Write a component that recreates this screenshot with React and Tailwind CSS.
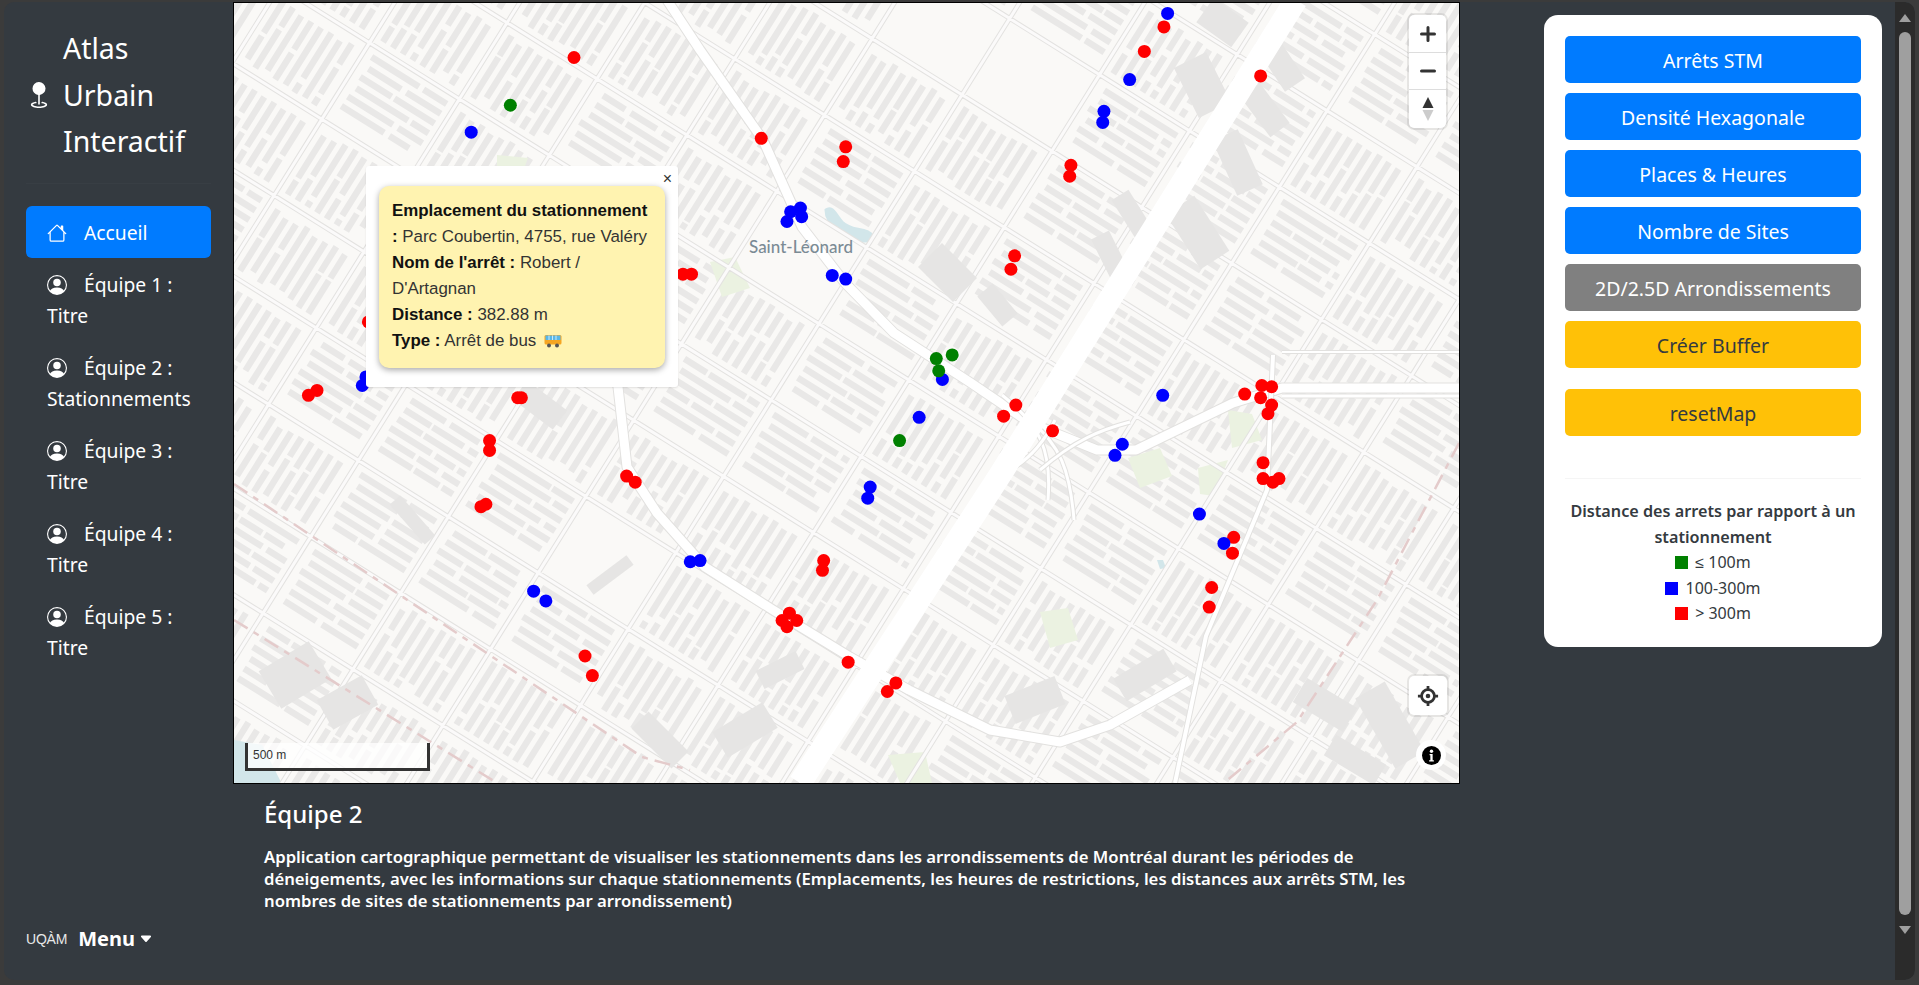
import React from "react";
import { BsGeoFill, BsHouse, BsPersonCircle, BsCaretDownFill } from "react-icons/bs";

// marker positions, page pixels
const s = 1.2239;
const RED = [[469,47],[622,113],[691,120],[689,132],[875,135],[874,144],[829,209],[826,220],[935,42],[951,22],[1030,62],[558,224],[565,224],[301,263],[252,323],[259,319],[423,325],[426,325],[400,360],[400,368],[393,414],[397,412],[512,389],[519,394],[673,458],[672,466],[645,501],[639,507],[651,507],[643,512],[478,536],[484,552],[693,541],[732,558],[725,565],[830,331],[820,340],[860,352],[1017,322],[1031,315],[1039,316],[1030,325],[1039,331],[1036,338],[1032,378],[1032,391],[1040,394],[1045,391],[1008,439],[1007,452],[990,480],[988,496]];
const BLUE = [[954,11],[923,65],[902,91],[901,100],[385,108],[646,173],[654,170],[655,177],[643,181],[680,225],[691,228],[770,310],[751,341],[711,398],[709,407],[950,323],[917,363],[911,372],[980,420],[1000,444],[564,459],[572,458],[436,483],[446,491],[296,315],[299,308]];
const GREEN = [[417,86],[765,293],[778,290],[767,303],[735,360]];

const EMPTY = [[985,60,62],[610,600,48],[800,225,40],[1240,450,28],[1190,430,22]];

function buildMap() {
  let seed = 42;
  const rnd = () => {
    seed = (seed * 16807) % 2147483647;
    return seed / 2147483647;
  };
  const ux = -0.53, uy = 0.848, vx = 0.848, vy = 0.53;
  let strips = "";
  let streets = "";
  const A = 106, B = 90;
  for (let i = -11; i < 13; i++) {
    for (let j = -11; j < 13; j++) {
      const cx = 840 + i * A * vx + j * B * ux;
      const cy = 390 + i * A * vy + j * B * uy;
      if (cx < 130 || cx > 1560 || cy < -90 || cy > 880) continue;
      const x0 = cx - (A / 2) * vx - (B / 2) * ux;
      const y0 = cy - (A / 2) * vy - (B / 2) * uy;
      streets += `M${x0} ${y0}l${A * vx} ${A * vy}M${x0} ${y0}l${B * ux} ${B * uy}`;
      if (EMPTY.some(([x, y, r]) => Math.hypot(cx - x, cy - y) < r)) continue;
      const flip = rnd() > 0.55;
      const [ax, ay, al, bx, by, bl] = flip ? [vx, vy, A, ux, uy, B] : [ux, uy, B, vx, vy, A];
      const n = Math.floor((bl - 12) / 11.5);
      for (let k = 0; k < n; k++) {
        const off = -bl / 2 + 11 + k * 11.5;
        const half = al / 2 - 8;
        // every strip is cut in pieces so the rows look like houses
        let t = -half + rnd() * 6;
        while (t < half - 6) {
          const len = Math.min(half - t, 22 + rnd() * 46);
          const px = cx + off * bx + t * ax;
          const py = cy + off * by + t * ay;
          strips += `M${px.toFixed(1)} ${py.toFixed(1)}l${(len * ax).toFixed(1)} ${(len * ay).toFixed(1)}`;
          t += len + 2 + rnd() * 5;
        }
      }
    }
  }
  return { strips, streets };
}

const { strips, streets } = buildMap();

const BIG_ROADS = [
  { d: "M667 0L700 50L763 140L802 227L845 283L894 333L971 383L1030 423L1097 450L1136 450L1233 403L1282 388L1460 388", w: 9 },
  { d: "M612 367L618 387L627 467L657 513L705 567L773 610L850 657L909 690L990 730L1060 742L1110 725L1190 680", w: 9 },
  { d: "M1273 355L1267 490L1206 636L1175 783", w: 4 },
  { d: "M1002 395C1040 425 1052 450 1048 500", w: 3 },
  { d: "M1030 420C1060 445 1070 470 1074 520", w: 3 },
  { d: "M1040 470C1075 440 1100 430 1130 422", w: 3 },
  { d: "M990 478C1020 470 1040 450 1055 420", w: 3 },
  { d: "M1282 396L1460 396", w: 3 },
  { d: "M1282 352L1460 352", w: 2 },
];

const BIG_HOUSES = [
  [1205,10,1240,35,30],[1190,60,1215,110,36],[1265,40,1295,85,24],[1250,90,1280,130,24],[1225,135,1250,190,28],
  [1180,205,1215,260,34],[1120,195,1145,235,20],[1100,235,1125,285,20],[930,255,965,290,34],[985,290,1010,320,20],
  [270,690,320,660,44],[325,715,370,690,34],[720,745,770,715,30],[640,720,680,760,24],[760,680,800,660,20],
  [1010,710,1060,690,30],[1120,690,1170,660,26],[1300,690,1350,720,28],[1370,690,1410,760,34],[1330,745,1380,775,24],
  [520,390,560,420,24],[395,500,430,540,14],[590,590,630,560,12],
];

const PARKS = ["M710 262L735 257L750 288L722 297Z", "M1040 612L1068 608L1078 640L1050 648Z", "M1128 458L1160 448L1172 476L1140 488Z", "M1198 468L1228 460L1214 496L1200 494Z", "M1228 410L1252 414L1262 440L1232 448Z", "M888 755L925 752L932 783L900 783Z", "M497 155L528 158L525 166L497 166Z"];

function MapDrawing() {
  return (
    <svg viewBox="234 3 1225 780" className="block h-full w-full">
      <rect x="234" y="3" width="1225" height="780" fill="#faf9f7" />
      <path d={strips} stroke="#e9e8e7" strokeWidth="6.5" fill="none" />
      {PARKS.map((d) => (
        <path key={d} d={d} fill="#ebf2e1" />
      ))}
      <path d="M826 210C832 205 836 215 842 222C850 230 858 228 868 232C876 236 874 242 862 241C850 240 842 232 835 226C830 222 826 218 826 210Z" fill="#d2e6ea" stroke="#d2e6ea" strokeWidth="3" />
      <path d="M234 740L262 745L282 784L234 784Z" fill="#d2e6ea" />
      <path d="M1157 560l6 0l3 8l-6 1z" fill="#d2e6ea" />
      <path d={streets} stroke="#e3e2e0" strokeWidth="5" fill="none" />
      <path d={streets} stroke="#fbfafa" strokeWidth="3" fill="none" />
      {BIG_HOUSES.map(([x1, y1, x2, y2, w]) => (
        <line key={`${x1}-${y1}`} x1={x1} y1={y1} x2={x2} y2={y2} stroke="#e6e5e4" strokeWidth={w} />
      ))}
      {BIG_ROADS.map((r) => (
        <g key={r.d} fill="none" strokeLinejoin="round">
          <path d={r.d} stroke="#e2e1df" strokeWidth={r.w + 2} />
          <path d={r.d} stroke="#ffffff" strokeWidth={r.w} />
        </g>
      ))}
      <path d="M1296 0L1240 90L1100 315L1000 475L800 783" stroke="#ffffff" strokeWidth="23" fill="none" />
      <g stroke="#e4cbcb" strokeWidth="2.5" fill="none" strokeDasharray="16 7 6 7">
        <path d="M234 484L642 757L690 770" />
        <path d="M234 620L497 783" />
        <path d="M1459 443L1377 600L1297 722L1224 783" />
      </g>
      {RED.map(([x, y]) => <circle key={`r${x}-${y}`} cx={x * s} cy={y * s} r="6.5" fill="#ff0000" />)}
      {BLUE.map(([x, y]) => <circle key={`b${x}-${y}`} cx={x * s} cy={y * s} r="6.5" fill="#0000ff" />)}
      {GREEN.map(([x, y]) => <circle key={`g${x}-${y}`} cx={x * s} cy={y * s} r="6.5" fill="#008000" />)}
      <text x="801" y="253" textAnchor="middle" fontFamily="Lato, sans-serif" fontSize="17" fontWeight="500" fill="#7b8b95">Saint-Léonard</text>
    </svg>
  );
}

function Popup() {
  return (
    <div className="absolute left-[132px] top-[163px] w-[312px] rounded-[3px] bg-white pb-[19px] pl-[13px] pr-[13px] pt-[20px] font-['Liberation_Sans',sans-serif] text-[16.9px] leading-[26px] text-[#333] shadow-[0_1px_2px_rgba(0,0,0,0.1)]">
      <span className="absolute right-[6px] top-[4px] text-[16px] leading-[18px] text-[#333]">×</span>
      <div className="rounded-[10px] bg-[#fff3b0] px-[13px] pb-[14px] pt-[12px] shadow-[0_2px_6px_rgba(0,0,0,0.35)]">
        <div><b className="text-[#111]">Emplacement du stationnement</b></div>
        <div><b className="text-[#111]">:</b> Parc Coubertin, 4755, rue Valéry</div>
        <div><b className="text-[#111]">Nom de l'arrêt :</b> Robert /</div>
        <div>D'Artagnan</div>
        <div><b className="text-[#111]">Distance :</b> 382.88 m</div>
        <div className="flex items-center">
          <span><b className="text-[#111]">Type :</b> Arrêt de bus</span>
          <svg viewBox="0 0 18 14" className="ml-[8px] h-[14px] w-[18px]">
            <rect x="0.5" y="1" width="17" height="9.5" rx="1.5" fill="#f5a623" />
            <rect x="1.5" y="1.5" width="15" height="4.5" fill="#58b7e8" />
            <path d="M5 1.5v4.5M8.5 1.5v4.5M12 1.5v4.5" stroke="#fff" strokeWidth="0.7" />
            <circle cx="5" cy="11.5" r="2" fill="#555" />
            <circle cx="13" cy="11.5" r="2" fill="#555" />
          </svg>
        </div>
      </div>
    </div>
  );
}

function MapControls() {
  return (
    <>
      <div className="absolute right-[13px] top-[12px] flex w-[37px] flex-col divide-y divide-[#ddd] rounded-[5px] bg-white shadow-[0_0_0_2px_rgba(0,0,0,0.08)]">
        <div className="flex h-[38px] items-center justify-center">
          <svg viewBox="0 0 16 16" className="h-[16px] w-[16px]"><path d="M8 1.5v13M1.5 8h13" stroke="#333" strokeWidth="3" strokeLinecap="round" /></svg>
        </div>
        <div className="flex h-[37px] items-center justify-center">
          <svg viewBox="0 0 16 16" className="h-[16px] w-[16px]"><path d="M1.5 8h13" stroke="#333" strokeWidth="3" strokeLinecap="round" /></svg>
        </div>
        <div className="flex h-[38px] items-center justify-center">
          <svg viewBox="0 0 12 26" className="h-[26px] w-[12px]">
            <path d="M6 1L11.5 12H0.5Z" fill="#333" />
            <path d="M6 25L11.5 14H0.5Z" fill="#ccc" />
          </svg>
        </div>
      </div>
      <div className="absolute right-[12px] top-[673px] flex h-[39px] w-[38px] items-center justify-center rounded-[5px] bg-white shadow-[0_0_0_2px_rgba(0,0,0,0.08)]">
        <svg viewBox="0 0 24 24" className="h-[22px] w-[22px]" fill="none">
          <circle cx="12" cy="12" r="7" stroke="#333" strokeWidth="3" />
          <circle cx="12" cy="12" r="2.5" fill="#333" />
          <path d="M12 1v4M12 19v4M1 12h4M19 12h4" stroke="#333" strokeWidth="3" />
        </svg>
      </div>
      <div className="absolute right-[13px] top-[737px] flex h-[30px] w-[30px] items-center justify-center rounded-full bg-white">
        <svg viewBox="0 0 20 20" className="h-[19px] w-[19px]">
          <circle cx="10" cy="10" r="10" fill="#000" />
          <circle cx="10" cy="5.5" r="1.8" fill="#fff" />
          <path d="M8 8.5h3.2v6.5h1.3v1.3h-5v-1.3h1.3v-5.2h-0.8z" fill="#fff" />
        </svg>
      </div>
      <div className="absolute bottom-[12px] left-[11px] h-[28px] w-[185px] border-[3px] border-t-0 border-[#333] bg-white/75 pl-[5px] font-['Liberation_Sans',sans-serif] text-[12px] leading-[24px] text-[#333]">
        500 m
      </div>
    </>
  );
}

function NavItem({ icon, active, children }) {
  return (
    <a href="#" className={`block rounded-[6px] pb-[9.5px] pl-[21px] pr-[21px] pt-[11.5px] leading-[31px] text-white ${active ? "bg-[#007bff]" : ""}`}>
      {icon}
      {children}
    </a>
  );
}

const person = <BsPersonCircle className="mr-[17px] inline-block h-[20px] w-[20px] align-[-3px]" />;

function Btn({ color, children, className = "" }) {
  return (
    <button className={`h-[47px] w-full rounded-[5px] pt-[2px] text-[19.5px] ${color} ${className}`}>{children}</button>
  );
}

function LegendRow({ color, children }) {
  return (
    <div className="flex items-center justify-center leading-[25.5px]">
      <span className={`mr-[7px] h-[13px] w-[13px] ${color}`} />
      {children}
    </div>
  );
}

export default function App() {
  return (
    <div className="flex h-[985px] w-full overflow-hidden bg-[#3b3b3b] pb-[5px] pl-[4px] pr-[4px] pt-[2px] font-['Noto_Sans',sans-serif]">
      <div className="flex min-w-0 flex-1 overflow-hidden rounded-[10px] bg-[#343a40]">
        {/* sidebar */}
        <aside className="flex w-[229px] shrink-0 flex-col pb-[26px] text-white">
          <div className="mt-[23px] flex items-center pl-[22px]">
            <BsGeoFill className="h-[26px] w-[26px]" />
            <div className="ml-[11px] text-[28.5px] leading-[46.5px]">
              Atlas<br />Urbain<br />Interactif
            </div>
          </div>
          <hr className="mx-[22px] mt-[18px] border-[#383e44]" />
          <nav className="mx-[22px] mt-[22px] text-[19.3px]">
            <NavItem active icon={<BsHouse className="mr-[17px] inline-block h-[20px] w-[20px] align-[-3px]" />}>Accueil</NavItem>
            <NavItem icon={person}>Équipe 1 : Titre</NavItem>
            <NavItem icon={person}>Équipe 2 : Stationnements</NavItem>
            <NavItem icon={person}>Équipe 3 : Titre</NavItem>
            <NavItem icon={person}>Équipe 4 : Titre</NavItem>
            <NavItem icon={person}>Équipe 5 : Titre</NavItem>
          </nav>
          <div className="mt-auto flex items-center pl-[22px]">
            <span className="font-['Liberation_Sans',sans-serif] text-[14px] font-light tracking-[-0.2px] text-[#e8e8e8]">UQÀM</span>
            <span className="ml-[11px] text-[20px] font-bold">Menu</span>
            <BsCaretDownFill className="ml-[4px] h-[14px] w-[14px]" />
          </div>
        </aside>

        {/* map and description */}
        <main className="w-[1227px] shrink-0">
          <div className="relative h-[782px] overflow-hidden border border-black">
            <MapDrawing />
            <Popup />
            <MapControls />
          </div>
          <div className="pl-[31px] pr-[10px] text-white">
            <h2 className="mt-[12px] text-[24px] font-medium leading-[36px]">Équipe 2</h2>
            <p className="mt-[14px] text-[16.7px] font-semibold leading-[22px]">
              Application cartographique permettant de visualiser les stationnements dans les arrondissements de Montréal durant les périodes de déneigements, avec les informations sur chaque stationnements (Emplacements, les heures de restrictions, les distances aux arrêts STM, les nombres de sites de stationnements par arrondissement)
            </p>
          </div>
        </main>

        {/* tools panel */}
        <section className="ml-[84px] mt-[13px] h-[632px] w-[338px] shrink-0 rounded-[14px] bg-white px-[21px] pt-[21px] text-[#343a40]">
          <div className="flex flex-col gap-[10px]">
            <Btn color="bg-[#007bff] text-white">Arrêts STM</Btn>
            <Btn color="bg-[#007bff] text-white">Densité Hexagonale</Btn>
            <Btn color="bg-[#007bff] text-white">Places & Heures</Btn>
            <Btn color="bg-[#007bff] text-white">Nombre de Sites</Btn>
            <Btn color="bg-[#808080] text-white">2D/2.5D Arrondissements</Btn>
            <Btn color="bg-[#ffc107] text-[#343a40]">Créer Buffer</Btn>
            <Btn color="bg-[#ffc107] text-[#343a40]" className="mt-[11px]">resetMap</Btn>
          </div>
          <hr className="mt-[42px] border-[#f5f5f5]" />
          <div className="mt-[19px] text-center text-[16px]">
            <div className="text-[16.2px] font-semibold leading-[26px]">Distance des arrets par rapport à un stationnement</div>
            <LegendRow color="bg-[#008000]">≤ 100m</LegendRow>
            <LegendRow color="bg-[#0000ff]">100-300m</LegendRow>
            <LegendRow color="bg-[#ff0000]">&gt; 300m</LegendRow>
          </div>
        </section>

        {/* scrollbar */}
        <div className="ml-auto flex w-[20px] shrink-0 flex-col items-start rounded-r-[10px] bg-[#2b2b2b] pl-[4px] pt-[12px]">
          <span className="h-0 w-0 border-x-[6px] border-b-[8px] border-x-transparent border-b-[#9f9f9f]" />
          <span className="mt-[10px] h-[883px] w-[12px] rounded-full bg-[#9f9f9f]" />
          <span className="mt-[11px] h-0 w-0 border-x-[6px] border-t-[8px] border-x-transparent border-t-[#9f9f9f]" />
        </div>
      </div>
    </div>
  );
}
